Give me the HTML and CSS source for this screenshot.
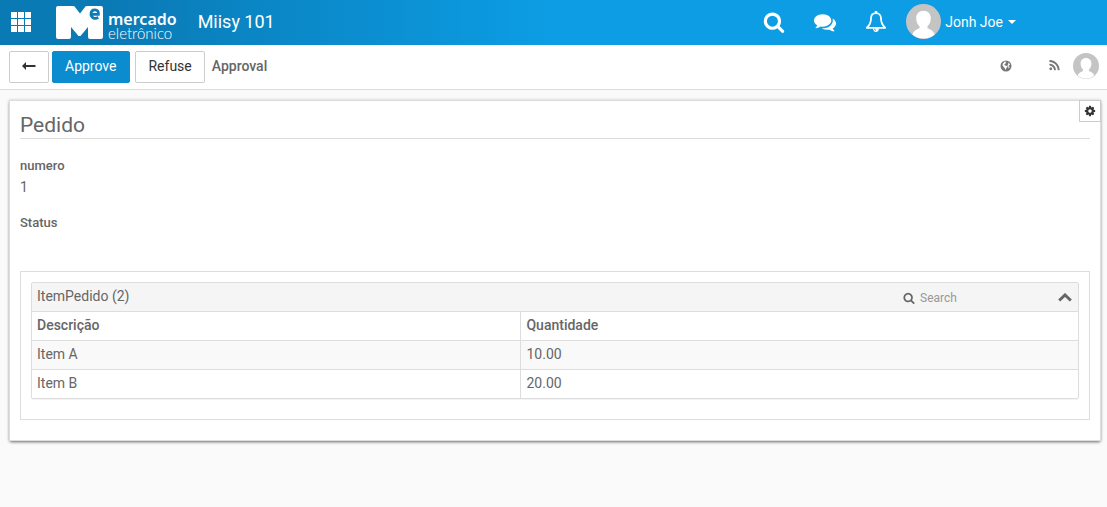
FILE: index.html
```html
<!DOCTYPE html>
<html lang="pt-BR">
<head>
<meta charset="utf-8">
<meta name="viewport" content="width=device-width, initial-scale=1">
<title>Miisy 101</title>
<link rel="stylesheet" href="styles.css">
</head>
<body>
<svg width="0" height="0" class="defs" aria-hidden="true">
  <symbol id="search" viewBox="0 0 1792 1792"><path d="M1216 832q0-185-131.500-316.500t-316.500-131.500-316.500 131.500-131.500 316.500 131.500 316.500 316.500 131.500 316.500-131.500 131.500-316.500zm512 832q0 52-38 90t-90 38q-54 0-90-38l-343-342q-179 124-399 124-143 0-273.500-55.500t-225-150-150-225-55.500-273.500 55.500-273.500 150-225 225-150 273.500-55.500 273.500 55.500 225 150 150 225 55.500 273.500q0 220-124 399l343 343q37 37 37 90z"/></symbol>
  <symbol id="person" viewBox="0 0 36 36"><circle cx="18" cy="18" r="18" fill="#c4c4c4"/><path fill="#fff" d="M18 7c-4.600 0-7.500 3.200-7.500 7.600 0 3.400 1.400 6.600 3.400 8.300v2c-3.400 1-6.400 3.100-7.400 6.500A18 18 0 0 0 18 35.500a18 18 0 0 0 11.500-4.100c-1-3.400-4-5.500-7.400-6.500v-2c2-1.700 3.400-4.900 3.400-8.300C25.500 10.200 22.600 7 18 7z"/></symbol>
</svg>
<header class="topbar">
  <button class="icon-btn apps" aria-label="Apps"><svg width="20" height="20" viewBox="0 0 20 20"><path d="M0 0h6v6H0zM7 0h6v6H7zM14 0h6v6h-6zM0 7h6v6H0zM7 7h6v6H7zM14 7h6v6h-6zM0 14h6v6H0zM7 14h6v6H7zM14 14h6v6h-6z"/></svg></button>
  <a class="logo" href="#">
    <svg width="47" height="33" viewBox="0 0 47 33"><path fill="#fff" d="M2 0h15q1.500 0 2.300 1.400L24 7.500l4.700-6.100Q29.500 0 31 0h14q2 0 2 2v29q0 2-2 2H34q-2 0-2-2V21l-7.500 9h-2L15 21v10q0 2-2 2H2q-2 0-2-2V2Q0 0 2 0z"/><path fill="none" stroke="#0c7cb6" stroke-width="2.800" d="M35.200 8.300h7.200C42.700 5 41.200 3.800 39 3.800c-2.500 0-4 1.800-4 4.300 0 3.800 3.600 5.200 7.300 3.500"/></svg>
    <span class="logo-text"><span class="logo-top">mercado</span><span class="logo-bottom">eletrônico</span></span>
  </a>
  <h1 class="app-name">Miisy 101</h1>
  <nav class="tools">
    <button class="icon-btn" aria-label="Search"><svg width="22" height="22"><use href="#search"/></svg></button>
    <button class="icon-btn" aria-label="Messages"><svg width="22" height="22" viewBox="0 0 1792 1792"><path d="M1408 768q0 139-94 257t-256.500 186.500-353.500 68.500q-86 0-176-16-124 88-278 128-36 9-86 16h-3q-11 0-20.500-8t-11.500-21q-1-3-1-6.500t.5-6.500 2-6l2.500-5 3.500-5.500 4-5 4.500-5 4-4.500q5-6 23-25t26-29.500 22.500-29 25-38.500 20.500-44q-124-72-195-177t-71-224q0-139 94-257t256.500-186.500 353.500-68.500 353.500 68.500 256.500 186.500 94 257zm384 256q0 120-71 224.500t-195 176.500q10 24 20.500 44t25 38.500 22.500 29 26 29.500 23 25q1 1 4 4.500t4.500 5 4 5 3.500 5.500l2.500 5 2 6 .5 6.500-1 6.500q-3 14-13 22t-22 7q-50-7-86-16-154-40-278-128-90 16-176 16-271 0-472-132 58 4 88 4 161 0 309-45t264-129q125-92 192-212t67-254q0-77-23-152 129 71 204 178t75 230z"/></svg></button>
    <button class="icon-btn" aria-label="Notifications"><svg width="22" height="22" viewBox="0 0 22 22"><path fill="none" stroke="#fff" stroke-width="1.800" stroke-linejoin="round" d="M11 2.200c-3.400 0-5 2.300-5 5.300 0 4-1 6.500-4.200 9.300h18.400C17 14 16 11.500 16 7.500c0-3-1.600-5.300-5-5.300z"/><path d="M9.800 0h2.400v2H9.800zM8 17.200h6c0 2.200-1.300 3.800-3 3.800s-3-1.600-3-3.800z"/><path fill="none" stroke="#0c9de4" d="M9.500 17.800c0 1 .6 1.500 1.500 1.500"/></svg></button>
    <button class="user"><svg width="35" height="35"><use href="#person"/></svg><span>Jonh Joe</span><i class="caret"></i></button>
  </nav>
</header>
<div class="actionbar">
  <button class="btn back" aria-label="Back"><svg width="14" height="8" viewBox="0 0 14 8"><path d="M0 4l4-4v3h9.500v2H4v3z"/></svg></button>
  <button class="btn primary">Approve</button>
  <button class="btn refuse">Refuse</button>
  <h2 class="step">Approval</h2>
  <div class="meta">
    <button class="icon-btn" aria-label="Language"><svg width="12" height="12" viewBox="0 0 12 12"><circle cx="6" cy="6" r="5.500"/><path fill="#fff" d="M4.500 1.800l1.300-.3.600.7-1 .5.300.9-1.500.9.900.9 1.900.5.500.9-1.300 1.400-.7 1.700-.9-2-1.600-1.600L2.500 5l.4-1.600zM8.300 2.500l1.200 1 .6 1.500-1.100.2-.6 1 1.300.9-.8 1.400-.9-1.700-.7-1.200 1-1.300z"/></svg></button>
    <button class="icon-btn" aria-label="Feed"><svg width="13" height="13" viewBox="0 0 1792 1792"><path d="M576 1344q0 80-56 136t-136 56-136-56-56-136 56-136 136-56 136 56 56 136zm512 123q2 28-17 48-18 21-47 21h-135q-25 0-43-16.500t-20-41.500q-22-229-184.500-391.500t-391.500-184.500q-25-2-41.500-20t-16.500-43v-135q0-29 21-47 17-17 43-17h5q160 13 306 80.500t259 181.500q114 113 181.500 259t80.500 306zm512 2q2 27-18 47-18 20-46 20h-143q-26 0-44.500-17.500t-19.500-42.500q-12-215-101-408.500t-231.500-336-336-231.500-408.500-102q-25-1-42.500-19.500t-17.500-43.500v-143q0-28 20-46 18-18 44-18h3q262 13 501.500 120t425.500 294q187 186 294 425.500t120 501.500z"/></svg></button>
    <svg class="mini-avatar" width="26" height="26"><use href="#person"/></svg>
  </div>
</div>
<main class="panel">
  <button class="settings" aria-label="Settings"><svg width="12" height="12" viewBox="0 0 1792 1792"><path d="M1152 896q0-106-75-181t-181-75-181 75-75 181 75 181 181 75 181-75 75-181zm512-109v222q0 12-8 23t-20 13l-185 28q-19 54-39 91 35 50 107 138 10 12 10 25t-9 23q-27 37-99 108t-94 71q-12 0-26-9l-138-108q-44 23-91 38-16 136-29 186-7 28-36 28h-222q-14 0-24.500-8.500t-11.500-21.500l-28-184q-49-16-90-37l-141 107q-10 9-25 9-14 0-25-11-126-114-165-168-7-10-7-23 0-12 8-23 15-21 51-66.500t54-70.500q-27-50-41-99l-183-27q-13-2-21-12.500t-8-23.500v-222q0-12 8-23t19-13l186-28q14-46 39-92-40-57-107-138-10-12-10-24 0-10 9-23 26-36 98.500-107.500t94.500-71.500q13 0 26 10l138 107q44-23 91-38 16-136 29-186 7-28 36-28h222q14 0 24.500 8.500t11.500 21.500l28 184q49 16 90 37l142-107q9-9 24-9 13 0 25 10 129 119 165 170 7 8 7 22 0 12-8 23-15 21-51 66.500t-54 70.500q26 50 41 98l183 28q13 2 21 12.500t8 23.500z"/></svg></button>
  <h2 class="panel-title">Pedido</h2>
  <dl class="fields">
    <div class="field"><dt>numero</dt><dd>1</dd></div>
    <div class="field"><dt>Status</dt><dd></dd></div>
  </dl>
  <section class="group">
    <div class="grid">
      <div class="grid-head">
        <h3>ItemPedido (2)</h3>
        <label class="search"><svg width="12" height="12"><use href="#search"/></svg><input type="text" placeholder="Search" aria-label="Search"></label>
        <button class="icon-btn" aria-label="Collapse"><svg width="14" height="9" viewBox="0 0 14 9"><path fill="none" stroke="#666" stroke-width="3" d="M1.200 7.500L7 2l5.800 5.500"/></svg></button>
      </div>
      <table>
        <thead><tr><th>Descrição</th><th>Quantidade</th></tr></thead>
        <tbody><tr><td>Item A</td><td>10.00</td></tr><tr><td>Item B</td><td>20.00</td></tr></tbody>
      </table>
    </div>
  </section>
</main>
</body>
</html>
```
FILE: styles.css
```css
* { box-sizing: border-box; }
body { margin: 0; min-height: 100vh; background: #fafafa; color: #666; font: 14px/20px Roboto, sans-serif; }
h1, h2, h3, dl, dd { margin: 0; }
button, input { font: inherit; color: inherit; }
button { cursor: pointer; }
svg { display: block; fill: currentColor; }
.defs { position: absolute; }
.icon-btn { display: block; padding: 0; border: 0; background: none; }

.topbar { display: flex; align-items: center; height: 45px; padding: 0 91px 2px 11px; color: #fff; background: linear-gradient(to right, #0a7ab5 10%, #0c9de4 50%); }
.logo { display: flex; gap: 5px; margin-left: 25px; padding-top: 2px; color: #fff; text-decoration: none; }
.logo-text { display: flex; flex-direction: column; padding-top: 6px; font-family: "Noto Sans", sans-serif; }
.logo-top { font-size: 16px; line-height: 14px; font-weight: 600; }
.logo-bottom { font-family: Lato, sans-serif; font-size: 15px; line-height: 14px; font-weight: 300; }
.app-name { margin-left: 21px; font-size: 18px; font-weight: 400; }
.tools { display: flex; align-items: center; gap: 29px; margin-left: auto; }
.user { display: flex; align-items: center; gap: 4px; margin-left: -10px; padding: 0; border: 0; background: none; }
.caret { margin-left: 1px; border: 4px solid transparent; border-top-color: #fff; border-bottom: 0; }

.actionbar { display: flex; align-items: center; height: 45px; padding: 0 8px 0 9px; background: #fff; border-bottom: 1px solid #ddd; }
.btn { height: 32px; padding: 0 12px 2px; color: #333; background: #fff; border: 1px solid #ccc; border-radius: 2px; }
.primary { margin: 0 5px 0 3px; padding: 0 13px 2px 12px; color: #fff; background: #0a8ccf; border-color: #0a8ccf; }
.step { margin-left: 7px; padding-bottom: 2px; font-size: 14px; font-weight: 500; }
.meta { display: flex; align-items: center; gap: 36px; margin-left: auto; padding-bottom: 3px; color: #777; }
.mini-avatar { margin-left: -24px; }

.panel { position: relative; margin: 10px 6px 0 9px; padding: 12px 10px 20px; background: #fff; border: 1px solid #ddd; box-shadow: 0 2px 3px -1px rgba(0, 0, 0, .5), 0 0 3px rgba(0, 0, 0, .2); }
.settings { position: absolute; top: -1px; right: -1px; padding: 4px; color: #333; background: #fff; border: 1px solid #ccc; }
.panel-title { padding-bottom: 1px; font-size: 21px; line-height: 24px; font-weight: 400; border-bottom: 1px solid #ddd; }
.fields { display: grid; gap: 14px; padding-top: 18px; }
.field dt { font-size: 13px; font-weight: 500; line-height: 18px; }
.field dd { min-height: 25px; line-height: 25px; }

.group { margin-top: 14px; padding: 10px 10px 20px; border: 1px solid #ddd; }
.grid { border: 1px solid #ddd; border-radius: 2px; box-shadow: 0 1px 1px rgba(0, 0, 0, .05); }
.grid-head { display: flex; align-items: center; height: 28px; padding: 0 6px 0 5px; background: #f5f5f5; }
.grid-head h3 { padding-bottom: 2px; font-size: 14px; font-weight: 400; }
.search { display: flex; align-items: center; gap: 5px; margin: 2px 8px 0 auto; font-size: 12px; }
.search input { width: 130px; height: 24px; padding: 0; border: 0; outline: 0; background: none; }
.search input::placeholder { color: #999; opacity: 1; }
table { width: 100%; border-spacing: 0; table-layout: fixed; }
th, td { height: 29px; padding: 3px 5px 5px; text-align: left; border-top: 1px solid #ddd; }
th { font-weight: 500; }
th:first-child { width: 46.7%; }
th + th, td + td { border-left: 1px solid #ddd; }
tbody tr:first-child { background: #f9f9f9; }
```
